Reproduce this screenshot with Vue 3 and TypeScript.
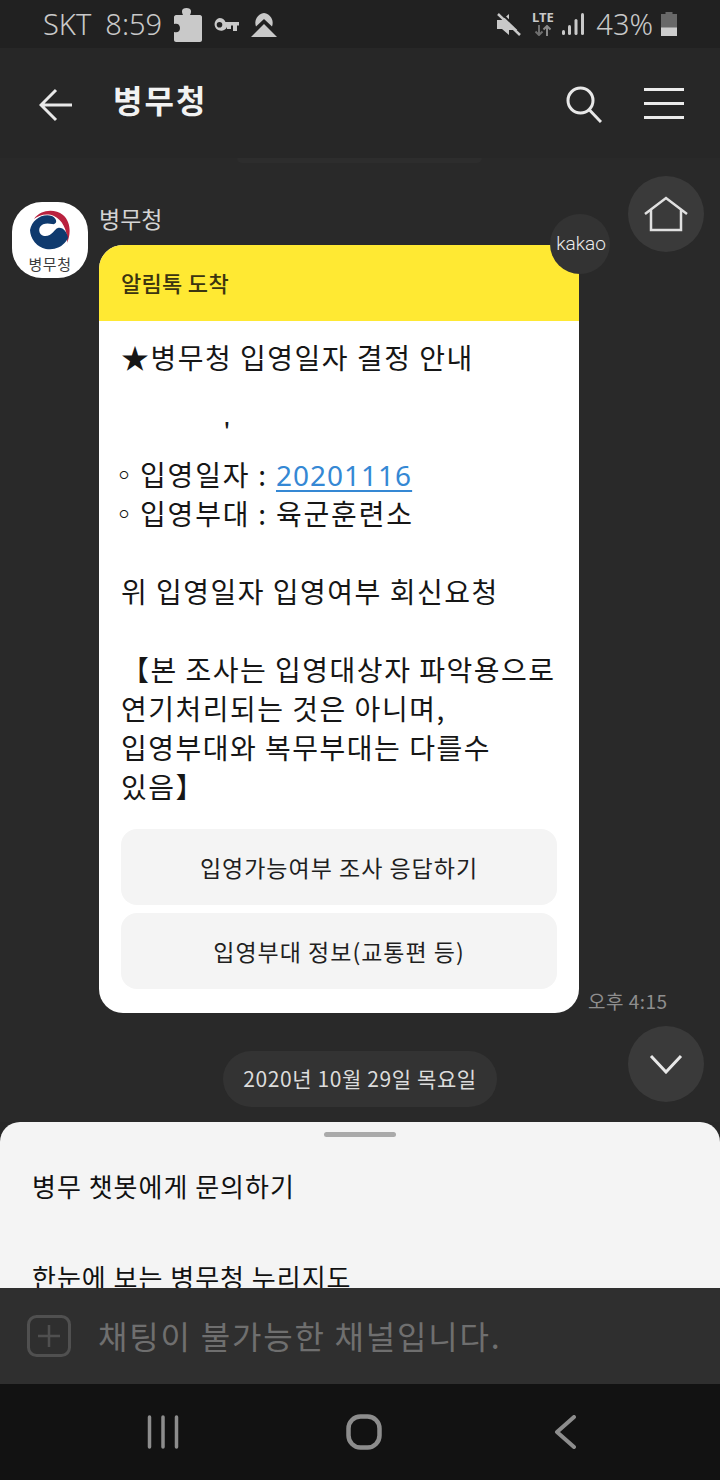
<script setup lang="ts">
interface Row {
  text: string
  dot?: boolean
  link?: string
  tick?: boolean
}

const rows: Row[] = [
  { text: '★병무청 입영일자 결정 안내' },
  { text: '' },
  { text: "'", tick: true },
  { text: '입영일자 : ', dot: true, link: '20201116' },
  { text: '입영부대 : 육군훈련소', dot: true },
  { text: '' },
  { text: '위 입영일자 입영여부 회신요청' },
  { text: '' },
  { text: '【본 조사는 입영대상자 파악용으로' },
  { text: '연기처리되는 것은 아니며,' },
  { text: '입영부대와 복무부대는 다를수' },
  { text: '있음】' }
]
const actions = ['입영가능여부 조사 응답하기', '입영부대 정보(교통편 등)']
const menus = ['병무 챗봇에게 문의하기', '한눈에 보는 병무청 누리지도']
</script>

<template>
  <div class="screen">
    <header class="status">
      <div class="status-left">
        <span class="status-text">SKT</span>
        <span class="status-text clock">8:59</span>
        <svg class="ic-puzzle" width="28" height="34" viewBox="0 0 28 34">
          <path d="M2 7h7c-1-2-1-3-1-4 0-2 2-3 4.500-3S17 1 17 3c0 1 0 2-1 4h10c1 0 2 1 2 2v23c0 1-1 2-2 2H2c-1 0-2-1-2-2V24c3 1 6 0 6-4s-3-5-6-4V9c0-1 1-2 2-2z" fill="#c9c9c9" />
        </svg>
        <svg class="ic-key" width="26" height="14" viewBox="0 0 26 14">
          <path d="M6.500 0a6.500 6.500 0 0 1 6 4H26v3.500h-2V13h-4V7.500h-2V11h-4V9a6.500 6.500 0 1 1-7.500-9zm0 4a2.800 2.800 0 1 0 0 5.600 2.800 2.800 0 0 0 0-5.600z" fill="#c9c9c9" fill-rule="evenodd" />
        </svg>
        <svg class="ic-nav" width="26" height="24" viewBox="0 0 26 24">
          <path d="M5 13.500A10 10 0 0 1 13 0a10 10 0 0 1 8 13.500L13 6z" fill="#c9c9c9" />
          <path d="M0 24L13 11l13 13z" fill="#c9c9c9" />
        </svg>
      </div>
      <div class="status-right">
        <svg class="ic-mute" width="24" height="23" viewBox="0 0 24 23">
          <path d="M0 7h5l7-6v6.500L21 17v0l-9 0v5l-7-6H0z" fill="#c9c9c9" />
          <path d="M1 1l22 21" stroke="#c9c9c9" stroke-width="2.500" />
          <path d="M4 0l20 19" stroke="#212121" stroke-width="2" />
        </svg>
        <div class="net">
          <span class="lte">LTE</span>
          <svg width="18" height="11" viewBox="0 0 18 11">
            <path d="M5 0v10M1.500 6.500L5 10l3.500-3.500" stroke="#6f6f6f" stroke-width="2" fill="none" />
            <path d="M13 11V1M9.500 4.500L13 1l3.500 3.500" stroke="#8a8a8a" stroke-width="2" fill="none" />
          </svg>
        </div>
        <svg class="ic-signal" width="22" height="22" viewBox="0 0 22 22">
          <rect x="0" y="17" width="3" height="5" rx="1.500" fill="#c9c9c9" />
          <rect x="6" y="12" width="3" height="10" rx="1.500" fill="#c9c9c9" />
          <rect x="12.500" y="6" width="3" height="16" rx="1.500" fill="#c9c9c9" />
          <rect x="19" y="0" width="3" height="22" rx="1.500" fill="#c9c9c9" />
        </svg>
        <span class="status-text pct">43%</span>
        <svg class="ic-batt" width="16" height="24" viewBox="0 0 16 24">
          <path d="M4.500 0h7v2H16v14H0V2h4.500z" fill="#686868" />
          <rect x="0" y="15.500" width="16" height="8.500" fill="#cdcdcd" />
        </svg>
      </div>
    </header>

    <nav class="toolbar">
      <svg class="back" width="34" height="34" viewBox="0 0 34 34">
        <path d="M33 17H3M17 2L2 17l15 15" stroke="#e8e8e8" stroke-width="3" fill="none" />
      </svg>
      <h1 class="title">병무청</h1>
      <svg class="search" width="36" height="37" viewBox="0 0 36 37">
        <circle cx="14.500" cy="14.500" r="12.500" stroke="#e8e8e8" stroke-width="3" fill="none" />
        <path d="M23.500 24L35 36" stroke="#e8e8e8" stroke-width="3" />
      </svg>
      <div class="menu"><i /><i /><i /></div>
    </nav>

    <main class="chat">
      <div class="edge" />
      <div class="msg">
        <div class="avatar">
          <svg width="40" height="40" viewBox="0 0 40 40">
            <path d="M4 9C10 0 24-2 33 5c8 7 8 19 4 28 1-11-4-23-13-27C17 3 9 5 4 9z" fill="#b9223f" />
            <path d="M22 6C12 3 2 10 0 20a20 20 0 0 0 38 8c-1-6-5-11-10-10-4 1-6 9-14 8-4-1-6-5-4-9 2-4 8-4 12-3 4 1 7-4 0-8z" fill="#0f3a6e" />
          </svg>
          <span class="avatar-name">병무청</span>
        </div>
        <div class="msg-col">
          <div class="sender">병무청</div>
          <div class="msg-line">
            <article class="bubble">
              <div class="bubble-head">알림톡 도착</div>
              <div class="bubble-body">
                <div v-for="(row, i) in rows" :key="i" class="line" :class="{ tick: row.tick, dotted: row.dot }"><span v-if="row.dot" class="dot">◦</span>{{ row.text }}<a v-if="row.link" class="link">{{ row.link }}</a></div>
              </div>
              <div class="actions">
                <button v-for="a in actions" :key="a" class="action">{{ a }}</button>
              </div>
            </article>
            <span class="time">오후 4:15</span>
          </div>
        </div>
      </div>
      <div class="date-row"><span class="date">2020년 10월 29일 목요일</span></div>

      <div class="kakao">kakao</div>
      <button class="float home">
        <svg width="44" height="36" viewBox="0 0 44 36">
          <path d="M1 18L22 2l21 16M7 14v20h30V14" stroke="#e0e0e0" stroke-width="2.500" fill="none" />
        </svg>
      </button>
      <button class="float down">
        <svg width="34" height="20" viewBox="0 0 34 20">
          <path d="M2 2l15 16L32 2" stroke="#e8e8e8" stroke-width="3" fill="none" />
        </svg>
      </button>
    </main>

    <section class="sheet">
      <div class="handle" />
      <div v-for="m in menus" :key="m" class="sheet-item">{{ m }}</div>
    </section>

    <footer class="inputbar">
      <svg width="44" height="42" viewBox="0 0 44 42">
        <rect x="1.500" y="1.500" width="41" height="39" rx="8" stroke="#505050" stroke-width="3" fill="none" />
        <path d="M22 10v22M11 21h22" stroke="#505050" stroke-width="2.500" />
      </svg>
      <span class="placeholder">채팅이 불가능한 채널입니다.</span>
    </footer>

    <div class="navbar">
      <svg width="32" height="34" viewBox="0 0 32 34">
        <path d="M2.500 2v30M16 2v30M29.500 2v30" stroke="#8d8d8d" stroke-width="3.500" stroke-linecap="round" />
      </svg>
      <svg class="nav-home" width="36" height="36" viewBox="0 0 36 36">
        <rect x="2.500" y="2.500" width="31" height="31" rx="12" stroke="#8d8d8d" stroke-width="4.500" fill="none" />
      </svg>
      <svg class="nav-back" width="22" height="34" viewBox="0 0 22 34">
        <path d="M20 2L3 17l17 15" stroke="#8d8d8d" stroke-width="4" stroke-linecap="round" stroke-linejoin="round" fill="none" />
      </svg>
    </div>
  </div>
</template>

<style scoped>
.screen {
  position: relative;
  width: 720px;
  height: 1480px;
  overflow: hidden;
  display: flex;
  flex-direction: column;
  background: #272727;
  font-family: "Noto Sans CJK KR", "Noto Sans", sans-serif;
}
.status {
  height: 48px;
  flex: none;
  background: #212121;
  display: flex;
  justify-content: space-between;
  align-items: center;
  padding: 0 43px;
  box-sizing: border-box;
}
.status-left,
.status-right {
  display: flex;
  align-items: center;
}
.status-text {
  font-family: "Noto Sans", sans-serif;
  font-size: 29px;
  line-height: 48px;
  color: #c9c9c9;
  font-weight: 300;
}
.clock {
  margin-left: 14px;
}
.ic-puzzle {
  margin-left: 12px;
  margin-top: 1px;
}
.ic-key {
  margin-left: 11px;
  margin-top: 2px;
}
.ic-nav {
  margin-left: 12px;
  margin-top: 2px;
}
.net {
  width: 23px;
  margin-left: 10px;
  display: flex;
  flex-direction: column;
  align-items: center;
  gap: 2px;
}
.lte {
  font-family: "Noto Sans", sans-serif;
  font-size: 13px;
  line-height: 11px;
  color: #c9c9c9;
  font-weight: 700;
}
.ic-signal {
  margin-left: 8px;
}
.pct {
  margin-left: 12px;
}
.ic-batt {
  margin-left: 8px;
}
.toolbar {
  height: 110px;
  flex: none;
  display: flex;
  align-items: center;
  padding: 0 36px 0 39px;
  box-sizing: border-box;
  background: #272727;
}
.back {
  margin-top: 4px;
}
.title {
  margin: 0 0 0 40px;
  flex: 1;
  font-size: 32px;
  line-height: 44px;
  font-weight: 700;
  color: #f2f2f2;
  letter-spacing: 2px;
  transform: translateY(-4px);
}
.search {
  margin-top: 2px;
}
.menu {
  width: 40px;
  margin-left: 42px;
  display: flex;
  flex-direction: column;
  gap: 11px;
}
.menu i {
  display: block;
  height: 3px;
  background: #ececec;
}
.chat {
  position: relative;
  flex: 1;
  min-height: 0;
  background: #292929;
}
.edge {
  width: 245px;
  height: 5px;
  margin: 0 0 0 237px;
  background: #2d2d2d;
  border-radius: 0 0 8px 8px;
}
.msg {
  display: flex;
  gap: 11px;
  margin: 39px 0 0 12px;
}
.avatar {
  width: 76px;
  height: 76px;
  flex: none;
  background: #fff;
  border-radius: 30px;
  display: flex;
  flex-direction: column;
  align-items: center;
  padding-top: 8px;
  box-sizing: border-box;
}
.avatar-name {
  font-size: 15px;
  line-height: 20px;
  letter-spacing: 0.5px;
  color: #3c3c3c;
  margin-top: 4px;
}
.msg-col {
  min-width: 0;
}
.sender {
  height: 43px;
  font-size: 23px;
  line-height: 32px;
  color: #d4d4d4;
}
.msg-line {
  display: flex;
  align-items: flex-end;
  gap: 9px;
}
.bubble {
  width: 480px;
  flex: none;
  background: #fff;
  border-radius: 24px;
  overflow: hidden;
  padding-bottom: 24px;
}
.bubble-head {
  height: 76px;
  background: #ffe933;
  padding-left: 22px;
  font-size: 22px;
  font-weight: 500;
  line-height: 74px;
  letter-spacing: 0.3px;
  color: #3b3410;
}
.bubble-body {
  padding: 17px 22px 0 22px;
}
.line {
  height: 39px;
  font-size: 28px;
  line-height: 39px;
  letter-spacing: 1.5px;
  color: #161616;
  white-space: pre;
}
.dotted {
  letter-spacing: 1.8px;
}
.dot {
  margin-left: -11px;
  margin-right: 2px;
  letter-spacing: 0;
}
.tick {
  padding-left: 103px;
  font-size: 18px;
  font-weight: 700;
  line-height: 25px;
}
.link {
  color: #3588d4;
  letter-spacing: 1px;
  text-decoration: underline;
  text-underline-offset: 4px;
  font-family: "Noto Sans", sans-serif;
}
.actions {
  margin: 23px 22px 0;
  display: flex;
  flex-direction: column;
  gap: 8px;
}
.action {
  height: 76px;
  border: none;
  border-radius: 16px;
  background: #f4f4f4;
  font-family: inherit;
  font-size: 23px;
  letter-spacing: 1px;
  color: #1f1f1f;
  padding: 0;
}
.time {
  font-size: 19px;
  line-height: 24px;
  letter-spacing: 0.5px;
  color: #8e8e8e;
  white-space: nowrap;
}
.date-row {
  display: flex;
  justify-content: center;
  margin-top: 38px;
}
.date {
  width: 274px;
  height: 56px;
  border-radius: 28px;
  background: #333;
  color: #dcdcdc;
  font-size: 21px;
  line-height: 54px;
  letter-spacing: 0.6px;
  text-align: center;
  white-space: nowrap;
}
.kakao {
  position: absolute;
  left: 550px;
  top: 56px;
  width: 60px;
  height: 60px;
  border-radius: 50%;
  background: #333;
  color: #ececec;
  font-family: Roboto, sans-serif;
  font-size: 19px;
  font-weight: 300;
  line-height: 60px;
  padding-left: 2px;
  box-sizing: border-box;
  text-align: center;
}
.float {
  position: absolute;
  left: 628px;
  width: 76px;
  height: 76px;
  border: none;
  padding: 0;
  border-radius: 50%;
  background: #3a3a3a;
  display: flex;
  align-items: center;
  justify-content: center;
}
.home {
  top: 18px;
}
.down {
  top: 868px;
}
.sheet {
  height: 166px;
  flex: none;
  overflow: hidden;
  background: #f4f4f4;
  border-radius: 20px 20px 0 0;
}
.handle {
  width: 72px;
  height: 5px;
  margin: 10px auto 0;
  border-radius: 3px;
  background: #aaa;
}
.sheet-item {
  height: 91px;
  padding-left: 32px;
  font-size: 26px;
  line-height: 91px;
  letter-spacing: 1px;
  color: #111;
  position: relative;
  top: 3px;
}
.inputbar {
  height: 96px;
  flex: none;
  background: #2f2f2f;
  display: flex;
  align-items: center;
  padding: 0 0 0 27px;
  box-sizing: border-box;
}
.placeholder {
  margin-left: 27px;
  margin-top: -2px;
  font-size: 32px;
  color: #6f6f6f;
  letter-spacing: 1.8px;
  white-space: nowrap;
}
.navbar {
  height: 96px;
  flex: none;
  background: #121212;
  display: flex;
  align-items: center;
  padding-left: 147px;
  box-sizing: border-box;
}
.nav-home {
  margin-left: 167px;
}
.nav-back {
  margin-left: 172px;
}
</style>

<style>
html,
body {
  margin: 0;
  background: #272727;
}
</style>
